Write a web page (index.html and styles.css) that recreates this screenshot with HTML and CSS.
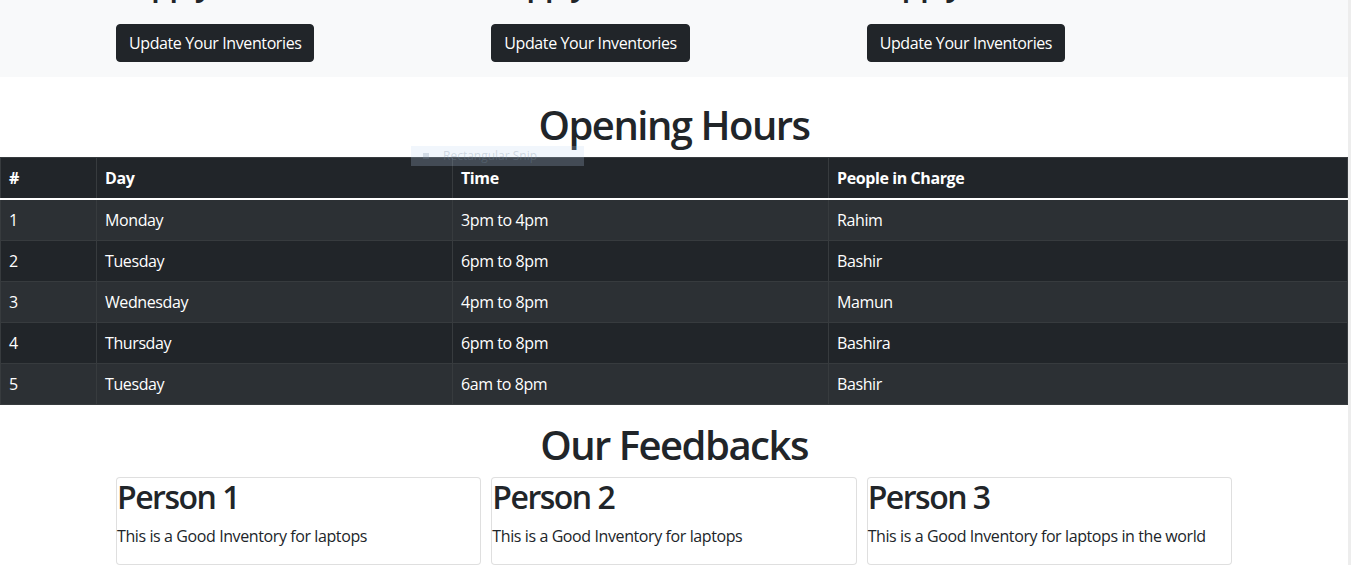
FILE: index.html
```html
<!DOCTYPE html>
<html lang="en">
<head>
<meta charset="utf-8">
<title>Inventory</title>
<link rel="stylesheet" href="styles.css">
</head>
<body>
<div class="page">
  <section class="supply">
    <div class="container">
      <div class="supply-grid">
        <div class="supply-item">
          <h2 class="supply-name">Supply Name:Iconia</h2>
          <button class="btn">Update Your Inventories</button>
        </div>
        <div class="supply-item">
          <h2 class="supply-name">Supply Name:Walton</h2>
          <button class="btn">Update Your Inventories</button>
        </div>
        <div class="supply-item">
          <h2 class="supply-name">Supply Name:Walton</h2>
          <button class="btn">Update Your Inventories</button>
        </div>
      </div>
    </div>
  </section>

  <h1 class="section-title hours-title">Opening Hours</h1>

  <table class="hours">
    <colgroup>
      <col class="c-num">
      <col class="c-day">
      <col class="c-time">
      <col>
    </colgroup>
    <thead>
      <tr><th>#</th><th>Day</th><th>Time</th><th>People in Charge</th></tr>
    </thead>
    <tbody>
      <tr><td>1</td><td>Monday</td><td>3pm to 4pm</td><td>Rahim</td></tr>
      <tr><td>2</td><td>Tuesday</td><td>6pm to 8pm</td><td>Bashir</td></tr>
      <tr><td>3</td><td>Wednesday</td><td>4pm to 8pm</td><td>Mamun</td></tr>
      <tr><td>4</td><td>Thursday</td><td>6pm to 8pm</td><td>Bashira</td></tr>
      <tr><td>5</td><td>Tuesday</td><td>6am to 8pm</td><td>Bashir</td></tr>
    </tbody>
  </table>

  <h1 class="section-title">Our Feedbacks</h1>

  <div class="container">
    <div class="cards">
      <div class="card">
        <h2 class="card-title">Person 1</h2>
        <p class="card-text">This is a Good Inventory for laptops</p>
      </div>
      <div class="card">
        <h2 class="card-title">Person 2</h2>
        <p class="card-text">This is a Good Inventory for laptops</p>
      </div>
      <div class="card">
        <h2 class="card-title">Person 3</h2>
        <p class="card-text">This is a Good Inventory for laptops in the world</p>
      </div>
    </div>
  </div>

  <div class="snip-tip"><span class="snip-icon"></span>Rectangular Snip</div>
</div>
</body>
</html>
```

FILE: styles.css
```css
* { box-sizing: border-box; }

html, body {
  margin: 0;
  padding: 0;
}

body {
  font-family: "Open Sans", "Noto Sans", sans-serif;
  font-size: 16px;
  line-height: 1.5;
  letter-spacing: -0.4px;
  color: #212529;
  background: #fff;
  border-right: 3px solid #ededed;
  overflow: hidden;
}

.page {
  position: relative;
  margin-top: -60px;
}

.container {
  width: 1140px;
  margin: 0 auto;
  padding: 0 12px;
}

.supply {
  background: #f8f9fa;
  padding: 24px 0 15px;
}

.supply-grid {
  display: grid;
  grid-template-columns: repeat(3, 1fr);
  gap: 10px;
}

.supply-name {
  margin: 0 0 22px;
  font-size: 32px;
  font-weight: 600;
  line-height: 1.2;
  letter-spacing: -1.5px;
}

.btn {
  display: inline-block;
  font-family: inherit;
  font-size: 16px;
  line-height: 1.5;
  letter-spacing: -0.4px;
  padding: 6px 12px;
  color: #fff;
  background: #212529;
  border: 1px solid #212529;
  border-radius: 4px;
}

.section-title {
  margin: 24px 0 8px;
  text-align: center;
  font-size: 40px;
  font-weight: 600;
  line-height: 1.2;
  letter-spacing: -1.5px;
}

.hours {
  width: 100%;
  border-collapse: collapse;
  background: #212529;
  color: #fff;
  margin-bottom: 16px;
}

.c-num { width: 96px; }
.c-day { width: 356px; }
.c-time { width: 376px; }

.hours th,
.hours td {
  text-align: left;
  padding: 8px;
  border: 1px solid #373b3e;
  line-height: 24px;
}

.hours th { font-weight: 700; }

.hours tbody { border-top: 2px solid #fff; }

.hours tbody tr:nth-child(odd) td { background: #2c3034; }

.hours + .section-title { margin-top: 16px; }

.cards {
  display: grid;
  grid-template-columns: repeat(3, 1fr);
  gap: 10px;
}

.card {
  border: 1px solid rgba(0, 0, 0, 0.125);
  border-radius: 4px;
  background: #fff;
}

.card-title {
  margin: 0 0 7px;
  font-size: 32px;
  font-weight: 600;
  line-height: 1.2;
  letter-spacing: -1.5px;
}

.card-text {
  margin: 0 0 16px;
}

.snip-tip {
  position: absolute;
  left: 411px;
  top: 206px;
  width: 173px;
  height: 20px;
  background: rgba(190, 215, 240, 0.22);
  color: rgba(120, 140, 160, 0.3);
  font-size: 12px;
  line-height: 20px;
  letter-spacing: 0;
  padding-left: 32px;
}

.snip-icon {
  position: absolute;
  left: 12px;
  top: 7px;
  width: 6px;
  height: 6px;
  background: rgba(120, 140, 160, 0.25);
}
```
